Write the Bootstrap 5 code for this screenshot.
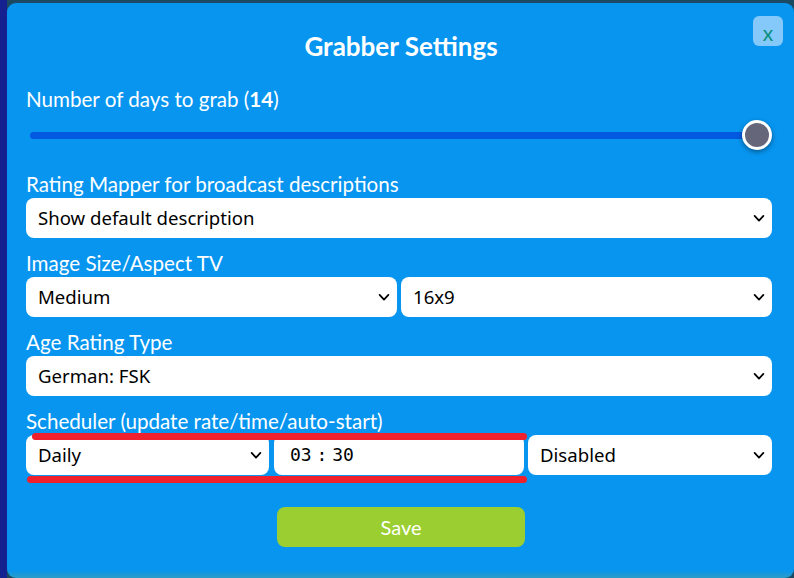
<!DOCTYPE html>
<html lang="en">

<head>
    <meta charset="UTF-8">
    <meta name="viewport" content="width=device-width, initial-scale=1.0">
    <title>Grabber Settings</title>
    <link href="https://cdn.jsdelivr.net/npm/bootstrap@5.3.0/dist/css/bootstrap.min.css" rel="stylesheet">
    <style>
        html, body {
            height: 100%;
            overflow: hidden;
        }

        body {
            background: linear-gradient(90deg, #15218f 0, #15218f 7px, #1c4a63 7px, #1c4a63 100%);
            font-family: "Lato", "Noto Sans", sans-serif;
        }

        .settings-box {
            position: relative;
            height: 575px;
            margin: 3px 0 0 7px;
            padding: 31px 22px 0 19px;
            color: #fff;
            background: linear-gradient(180deg, #0795f0 0, #0795f0 567px, #2a9bc4 575px);
            border-radius: 9px;
        }

        .settings-title {
            margin: 0;
            padding-left: 4px;
            font-size: 26px;
            line-height: 24px;
            font-weight: 700;
            text-align: center;
        }

        .close-x {
            position: absolute;
            top: 13px;
            right: 11px;
            width: 30px;
            height: 30px;
            padding: 3px 0 0;
            font-size: 21px;
            line-height: 24px;
            color: #0c8f80;
            background: #85c9fa;
            border: 0;
            border-radius: 6px;
        }

        .field-label {
            display: block;
            margin: 0;
            padding-bottom: 4px;
            font-size: 20.6px;
            line-height: 20px;
        }

        .days-label {
            margin-top: 31px;
        }

        .days-range {
            display: block;
            width: 742px;
            height: 32px;
            margin: 6px 0 23px 4px;
        }

        .days-range::-webkit-slider-runnable-track {
            height: 7px;
            background: #0459e2;
            border-radius: 4px;
        }

        .days-range::-webkit-slider-thumb {
            width: 30px;
            height: 30px;
            margin-top: -12px;
            background: #66667a;
            border: 3px solid #fff;
            border-radius: 50%;
            box-shadow: 0 2px 5px rgba(0, 0, 0, .4);
            -webkit-appearance: none;
            appearance: none;
        }

        .field-group {
            margin-bottom: 15px;
        }

        .field-row {
            gap: 4px;
        }

        .settings-select, .time-text {
            height: 40px;
            padding: 0 12px;
            font-size: 18.6px;
            line-height: 40px;
            color: #000;
            border: 0;
            border-radius: 8px;
            font-family: "Noto Sans", sans-serif;
        }

        .settings-select {
            --bs-form-select-bg-img: url("data:image/svg+xml,%3csvg xmlns='http://www.w3.org/2000/svg' viewBox='0 0 16 16'%3e%3cpath fill='none' stroke='%23000' stroke-linecap='round' stroke-linejoin='round' stroke-width='2' d='m3 5.5 5 5.5 5-5.5'/%3e%3c/svg%3e");
            background-position: right 6px center;
            background-size: 14px 14px;
        }

        .time-text {
            padding-left: 16px;
            font-family: "DejaVu Sans Mono", monospace;
            font-size: 18px;
            word-spacing: -6px;
        }

        .sched-first {
            flex: 0 0 243px;
            width: 243px;
        }

        .sched-time {
            flex: 0 0 250px;
            width: 250px;
            margin-left: 1px;
        }

        .sched-last {
            flex: 0 0 244px;
            width: 244px;
        }

        .time-wrap {
            position: relative;
        }

        .red-mark {
            position: absolute;
            height: 7px;
            background: #f0202c;
            border-radius: 4px;
        }

        .red-top {
            top: -2px;
            left: 6px;
            width: 495px;
        }

        .red-bottom {
            top: 41px;
            left: 1px;
            width: 500px;
        }

        .save-btn {
            display: block;
            width: 248px;
            height: 40px;
            margin: 32px 0 0 251px;
            padding: 0;
            font-size: 20px;
            color: #fff;
            background: #9bcf31;
            border: 0;
            border-radius: 8px;
        }
    </style>
</head>

<body>

    <div class="settings-box">
        <h1 class="settings-title">Grabber Settings</h1>
        <button type="button" class="close-x">x</button>

        <label class="field-label days-label" for="days">Number of days to grab (<b>14</b>)</label>
        <input id="days" class="form-range days-range" type="range" min="1" max="14" value="14">

        <div class="field-group">
            <label class="field-label" for="mapper">Rating Mapper for broadcast descriptions</label>
            <select id="mapper" class="form-select settings-select">
                <option>Show default description</option>
            </select>
        </div>

        <div class="field-group">
            <label class="field-label">Image Size/Aspect TV</label>
            <div class="d-flex field-row">
                <select class="form-select settings-select">
                    <option>Medium</option>
                </select>
                <select class="form-select settings-select">
                    <option>16x9</option>
                </select>
            </div>
        </div>

        <div class="field-group">
            <label class="field-label" for="age">Age Rating Type</label>
            <select id="age" class="form-select settings-select">
                <option>German: FSK</option>
            </select>
        </div>

        <div class="field-group m-0">
            <label class="field-label">Scheduler (update rate/time/auto-start)</label>
            <div class="d-flex field-row time-wrap">
                <select class="form-select settings-select sched-first">
                    <option>Daily</option>
                </select>
                <input class="form-control time-text sched-time" type="text" value="03 : 30">
                <select class="form-select settings-select sched-last">
                    <option>Disabled</option>
                </select>
                <div class="red-mark red-top"></div>
                <div class="red-mark red-bottom"></div>
            </div>
        </div>

        <button type="button" class="btn save-btn">Save</button>
    </div>

</body>

</html>
